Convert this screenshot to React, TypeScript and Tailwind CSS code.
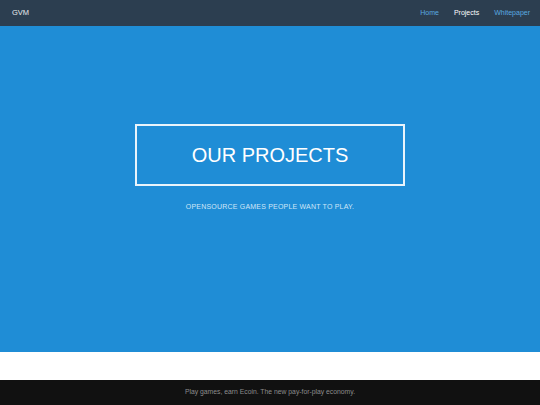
export default function App() {
  return (
    <div className="min-h-[405px] flex flex-col font-['Liberation_Sans',Arial,sans-serif]">
      {/* Barra superior */}
      <nav className="h-[26px] bg-[#2c3e50] flex items-center justify-between pl-3 pr-[10px] text-[7px]">
        <span className="text-[#e8ecef] text-[7.5px]">GVM</span>
        <div className="flex items-center gap-[15px]">
          <a className="text-[#5aa9e0]">Home</a>
          <a className="text-white">Projects</a>
          <a className="text-[#5aa9e0]">Whitepaper</a>
        </div>
      </nav>

      {/* Hero */}
      <section className="h-[326px] bg-[#1f8dd6] flex flex-col items-center pt-[98px]">
        <div className="w-[270px] h-[62px] border-2 border-white/90 flex items-center justify-center">
          <h1 className="text-white text-[20px] leading-none">OUR PROJECTS</h1>
        </div>
        <p className="mt-[16px] text-[7px] tracking-[0.2px] text-[#cfe6f7]">
          OPENSOURCE GAMES PEOPLE WANT TO PLAY.
        </p>
      </section>

      <div className="h-[28px] bg-white" />

      {/* Pie */}
      <footer className="h-[25px] bg-[#111111] flex items-center justify-center">
        <p className="text-[6.8px] text-[#8c8c8c]">Play games, earn Ecoin. The new pay-for-play economy.</p>
      </footer>
    </div>
  );
}
